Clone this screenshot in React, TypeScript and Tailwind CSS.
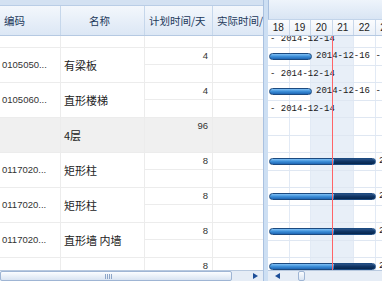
import React from "react"

type Row = { code: string; name: string; plan: string; kind: "short" | "long" | "group" }

const rows: Row[] = [
  { code: "0105040...", name: "平板", plan: "4", kind: "short" },
  { code: "0105050...", name: "有梁板", plan: "4", kind: "short" },
  { code: "0105060...", name: "直形楼梯", plan: "4", kind: "short" },
  { code: "", name: "4层", plan: "96", kind: "group" },
  { code: "0117020...", name: "矩形柱", plan: "8", kind: "long" },
  { code: "0117020...", name: "矩形柱", plan: "8", kind: "long" },
  { code: "0117020...", name: "直形墙 内墙", plan: "8", kind: "long" },
  { code: "0117020...", name: "直形墙 外墙", plan: "8", kind: "long" },
]

const days = ["18", "19", "20", "21", "22", "23"]

const cjk = { fontFamily: '"Noto Sans CJK SC", "Liberation Sans", sans-serif' }
const sans = { fontFamily: '"Liberation Sans", Arial, sans-serif' }
const mono = { fontFamily: '"Liberation Mono", "Courier New", monospace' }

function LeftGrid() {
  return (
    <div className="flex h-full w-[263px] flex-col overflow-hidden bg-white">
      {/* header */}
      <div className="h-[6px] border-b border-[#b9cde6] bg-[#d3e1f2]" />
      <div
        className="flex h-[30px] shrink-0 border-b border-[#b5c9e2] bg-gradient-to-b from-[#f3f7fc] to-[#dce7f5] text-[10.5px] text-[#22385a]"
        style={cjk}
      >
        <div className="flex w-[61px] shrink-0 items-center border-r border-[#c6d7eb] pl-[4px]">编码</div>
        <div className="flex w-[84px] shrink-0 items-center justify-center border-r border-[#c6d7eb] pr-[6px]">名称</div>
        <div className="flex w-[68px] shrink-0 items-center overflow-hidden whitespace-nowrap border-r border-[#c6d7eb] pl-[4px]">计划时间/天</div>
        <div className="flex w-[60px] shrink-0 items-center whitespace-nowrap pl-[4px]">实际时间/天</div>
      </div>

      {/* body */}
      <div className="relative flex-1 overflow-hidden">
        <div className="-mt-[23px]">
          {rows.map((r, i) => (
            <div
              key={i}
              className={`flex h-[35px] border-b border-[#ececec] ${r.kind === "group" ? "bg-[#f0f0f0]" : ""}`}
            >
              <div
                className="flex w-[61px] shrink-0 items-center whitespace-nowrap border-r border-[#ececec] pl-[2px] text-[9.5px] text-[#333]"
                style={sans}
              >
                {r.code}
              </div>
              <div
                className="flex w-[84px] shrink-0 items-center whitespace-nowrap border-r border-[#ececec] pl-[3px] text-[11px] text-[#222]"
                style={cjk}
              >
                {r.name}
              </div>
              <div className="flex w-[68px] shrink-0 flex-col border-r border-[#ececec] text-[9.5px] text-[#333]" style={sans}>
                <div
                  className={`flex h-[17px] items-center justify-end pr-[4px] ${r.kind === "group" ? "" : "border-b border-[#ececec]"}`}
                >
                  {r.plan}
                </div>
              </div>
              <div className="flex w-[60px] shrink-0 flex-col">
                <div className={`h-[17px] ${r.kind === "group" ? "" : "border-b border-[#ececec]"}`} />
              </div>
            </div>
          ))}
        </div>
      </div>

      {/* scrollbar */}
      <div className="relative flex h-[11px] shrink-0 items-center border-t border-[#b8c9df] bg-[#e6edf6]">
        <div className="flex h-[10px] w-[232px] items-center justify-center rounded-[2px] border border-[#9fb5d4] bg-gradient-to-b from-[#fbfdff] to-[#d9e4f2] pr-[16px]">
          <div className="flex gap-[1px]">
            <div className="h-[5px] w-[1px] bg-[#8ea6c8]" />
            <div className="h-[5px] w-[1px] bg-[#8ea6c8]" />
            <div className="h-[5px] w-[1px] bg-[#8ea6c8]" />
            <div className="h-[5px] w-[1px] bg-[#8ea6c8]" />
          </div>
        </div>
        <div className="ml-auto mr-[5px] h-0 w-0 border-y-[3.5px] border-l-[5px] border-y-transparent border-l-[#1d4e98]" />
      </div>
    </div>
  )
}

function BlueBar({ width, navyFrom }: { width: number; navyFrom?: number }) {
  return (
    <div
      className="absolute left-[1px] top-[5px] h-[7px] overflow-hidden rounded-full border border-[#1c4a80] bg-gradient-to-b from-[#7fc0f5] via-[#3d8fd8] to-[#1f66b4]"
      style={{ width }}
    >
      {navyFrom !== undefined && (
        <div
          className="absolute bottom-0 right-0 top-0 bg-gradient-to-b from-[#2a5286] via-[#0f3565] to-[#08264c]"
          style={{ left: navyFrom }}
        />
      )}
    </div>
  )
}

function Gantt() {
  return (
    <div className="flex h-full flex-1 flex-col overflow-hidden bg-white">
      {/* header */}
      <div className="h-[20px] shrink-0 border-b border-[#c2d4ea] border-l border-l-[#a9c0df] bg-gradient-to-b from-[#eef4fb] to-[#d9e5f4]" />
      <div className="flex h-[16px] shrink-0 border-b border-[#b5c9e2] bg-gradient-to-b from-[#fbfcfe] to-[#eaf0f8] text-[10px] text-[#222]" style={sans}>
        {days.map((d) => (
          <div key={d} className="flex w-[21.5px] shrink-0 items-center justify-center border-r border-[#c8d7ea]">
            {d}
          </div>
        ))}
      </div>

      {/* body */}
      <div className="relative flex-1 overflow-hidden">
        <div className="absolute inset-0 flex">
          {days.map((d, i) => (
            <div
              key={d}
              className={`h-full w-[21.5px] shrink-0 border-r border-[#e2eaf5] ${i === 2 || i === 3 ? "bg-[#e8eff8]" : ""}`}
            />
          ))}
        </div>

        <div className="relative -mt-[23px]">
          {rows.map((r, i) => (
            <div key={i} className="h-[35px]">
              <div className="relative h-[17.5px] border-b border-[#dfe7f2]">
                {r.kind === "short" && (
                  <>
                    <BlueBar width={43} />
                    <div className="absolute left-[48px] top-[2px] whitespace-nowrap text-[9px] leading-[13px] text-[#1a1a1a]" style={mono}>
                      2014-12-16 -
                    </div>
                  </>
                )}
                {r.kind === "long" && (
                  <>
                    <BlueBar width={107} navyFrom={64} />
                    <div className="absolute left-[111px] top-[2px] whitespace-nowrap text-[9px] leading-[13px] text-[#1a1a1a]" style={mono}>
                      2014-12-18 -
                    </div>
                  </>
                )}
              </div>
              <div className="relative h-[17.5px] border-b border-[#dfe7f2]">
                {r.kind === "short" && (
                  <div className="absolute left-[2px] top-[2px] whitespace-nowrap text-[9px] leading-[13px] text-[#1a1a1a]" style={mono}>
                    - 2014-12-14
                  </div>
                )}
              </div>
            </div>
          ))}
        </div>

        {/* today marker */}
        <div className="absolute bottom-0 top-0 left-[64px] z-10 w-[1px] bg-red-400" />
      </div>

      {/* scrollbar */}
      <div className="flex h-[11px] shrink-0 items-center border-t border-[#b8c9df] bg-[#e6edf6]">
        <div className="ml-[7px] h-0 w-0 border-y-[3.5px] border-r-[5px] border-y-transparent border-r-[#1d4e98]" />
        <div className="ml-[18px] h-[10px] w-[7px] rounded-[2px] border border-[#9fb5d4] bg-gradient-to-b from-[#fbfdff] to-[#d9e4f2]" />
      </div>
    </div>
  )
}

export default function App() {
  return (
    <div className="flex h-[281px] w-[382px] overflow-hidden bg-white">
      <LeftGrid />
      <div className="h-full w-[5px] shrink-0 border-l border-[#a9c1e0] bg-[#cddff3]" />
      <Gantt />
    </div>
  )
}
